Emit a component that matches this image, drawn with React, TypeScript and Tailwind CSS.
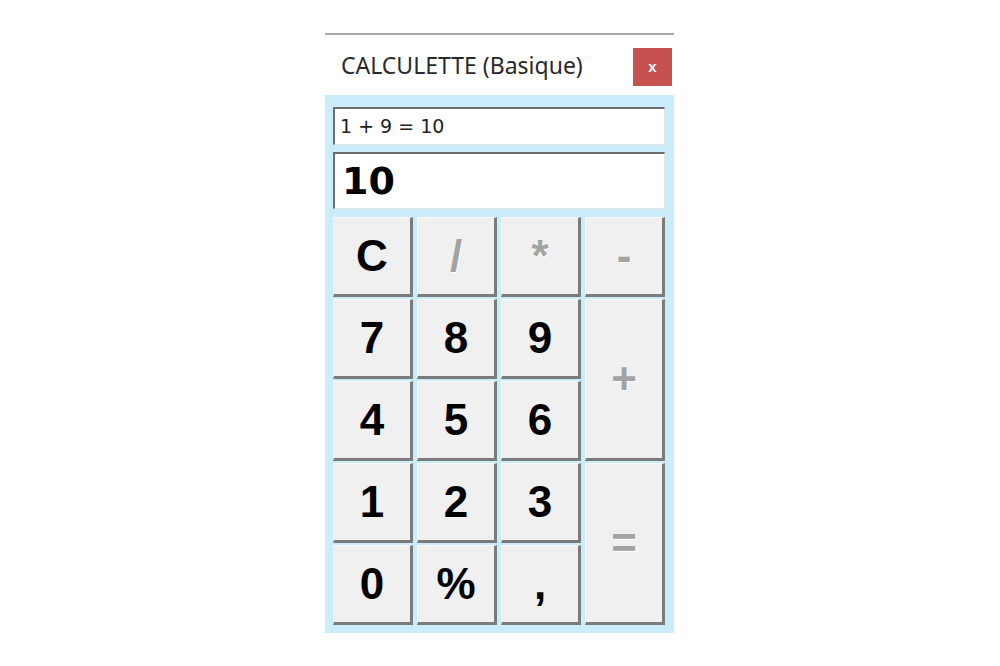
import React from "react";

type Key = { label: string; disabled?: boolean; cls?: string };

const keys: Key[] = [
  { label: "C" },
  { label: "/", disabled: true },
  { label: "*", disabled: true },
  { label: "-", disabled: true },
  { label: "7" },
  { label: "8" },
  { label: "9" },
  { label: "+", disabled: true, cls: "row-span-2" },
  { label: "4" },
  { label: "5" },
  { label: "6" },
  { label: "1" },
  { label: "2" },
  { label: "3" },
  { label: "=", disabled: true, cls: "row-span-2" },
  { label: "0" },
  { label: "%" },
  { label: "," },
];

export default function App() {
  return (
    <div className="w-full h-[666px] bg-white overflow-hidden">
      <div className="ml-[325px] mt-[33px] w-[349px] border-t-2 border-[#a9a9a9]">
        <div className="h-[60px] flex items-start justify-between">
          <div
            className="pl-[16px] pt-[15px] text-[23px] leading-[30px] text-[#2a2a2a]"
            style={{ fontFamily: '"Noto Sans", "Open Sans", sans-serif' }}
          >
            CALCULETTE (Basique)
          </div>
          <div
            className="mt-[13px] mr-[2px] w-[39px] h-[38px] bg-[#c75050] flex items-center justify-center text-white text-[15px] font-bold"
            style={{ fontFamily: '"Liberation Sans", sans-serif' }}
          >
            x
          </div>
        </div>
        <div className="bg-[#cbedfb] pt-[12px] pl-[8px] pr-[9px] pb-[8px]">
          <div
            className="h-[38px] bg-white border-t-2 border-l-2 border-t-[#6e6e6e] border-l-[#6e6e6e] border-b border-r border-b-[#e4e4e4] border-r-[#e4e4e4] flex items-center pl-[5px] text-[19px] text-[#222]"
            style={{ fontFamily: '"DejaVu Sans", "Noto Sans", sans-serif' }}
          >
            1 + 9 = 10
          </div>
          <div
            className="mt-[7px] h-[57px] bg-white border-t-2 border-l-2 border-t-[#6e6e6e] border-l-[#6e6e6e] border-b border-r border-b-[#e4e4e4] border-r-[#e4e4e4] flex items-center pl-[7px] text-[38px] font-bold text-black"
            style={{ fontFamily: '"DejaVu Sans", Verdana, sans-serif' }}
          >
            10
          </div>
          <div className="mt-[8px] grid grid-cols-[repeat(4,80px)] grid-rows-[repeat(5,80px)] gap-x-[4px] gap-y-[2px]">
            {keys.map((k) => (
              <div
                key={k.label}
                className={
                  "bg-[#f0f0f0] border-t border-l border-t-[#fafafa] border-l-[#fafafa] border-b-[3px] border-r-[3px] border-b-[#7b7b7b] border-r-[#7b7b7b] flex items-center justify-center text-[44px] font-bold " +
                  (k.disabled
                    ? "text-[#a3a3a3] [text-shadow:1px_1px_0_#ffffff] "
                    : "text-black ") +
                  (k.cls ?? "")
                }
                style={{ fontFamily: '"Liberation Sans", Arial, sans-serif' }}
              >
                {k.label}
              </div>
            ))}
          </div>
        </div>
      </div>
    </div>
  );
}
